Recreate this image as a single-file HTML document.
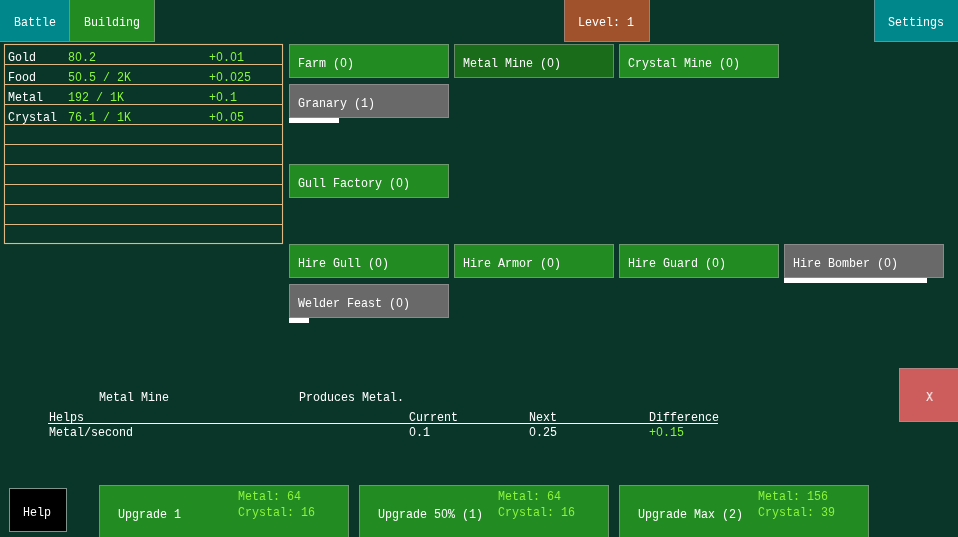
<!DOCTYPE html>
<html><head><meta charset="utf-8"><title>Game</title>
<style>
html,body{margin:0;padding:0;}
body{width:958px;height:537px;overflow:hidden;position:relative;background:#0a3629;font-family:"Liberation Mono",monospace;}
#w{position:absolute;left:0;top:0;width:958px;height:537px;overflow:hidden;will-change:transform;}
.b{position:absolute;box-sizing:border-box;}
.btn{border:1px solid rgba(160,160,160,0.6);}
.teal{background:#00878b;} .green{background:#228b22;} .dgreen{background:#1a6b1a;} .gray{background:#696969;}
.sienna{background:#a0522d;} .red{background:#cd5c5c;}
.help{background:#000;border-color:rgba(170,195,185,0.75);}
.bar{height:5px;background:#fff;}
.rule{height:1px;background:#fff;}
#res{border:1px solid #deb887;box-shadow:0 0 1px rgba(210,160,90,0.55),inset 0 0 1px rgba(210,160,90,0.55);}
.row{position:absolute;left:0;width:277px;height:20px;box-sizing:border-box;border-bottom:1px solid #deb887;}
.row.last{border-bottom:0;height:18px;}
.t{position:absolute;white-space:pre;font-size:13px;line-height:16px;color:#fff;transform:scaleX(0.8973);transform-origin:0 0;}
.lime{color:#8af53a;}
.z{display:inline-block;width:0.6001em;text-align:center;line-height:0;font-family:"Liberation Sans",sans-serif;}
</style></head><body><div id="w">
<div id="nav">
<div class="b btn teal" style="left:-2px;top:-2px;width:72px;height:44px;"><span class="t" style="left:14.5px;top:16px">Battle</span></div>
<div class="b btn green" style="left:69px;top:-2px;width:86px;height:44px;"><span class="t" style="left:13.5px;top:16px">Building</span></div>
<div class="b btn sienna" style="left:564px;top:-2px;width:86px;height:44px;"><span class="t" style="left:12.5px;top:16px">Level: 1</span></div>
<div class="b btn teal" style="left:874px;top:-2px;width:86px;height:44px;"><span class="t" style="left:13px;top:16px">Settings</span></div>
</div>
<div id="res" class="b" style="left:4px;top:44px;width:279px;height:200px">
<div class="row" style="top:0px"><span class="t" style="left:3.3px;top:5px">Gold</span><span class="t lime" style="left:63.3px;top:5px">8<span class="z">0</span>.2</span><span class="t lime" style="left:203.9px;top:5px">+<span class="z">0</span>.<span class="z">0</span>1</span></div>
<div class="row" style="top:20px"><span class="t" style="left:3.3px;top:5px">Food</span><span class="t lime" style="left:63.3px;top:5px">5<span class="z">0</span>.5 / 2K</span><span class="t lime" style="left:203.9px;top:5px">+<span class="z">0</span>.<span class="z">0</span>25</span></div>
<div class="row" style="top:40px"><span class="t" style="left:3.3px;top:5px">Metal</span><span class="t lime" style="left:63.3px;top:5px">192 / 1K</span><span class="t lime" style="left:203.9px;top:5px">+<span class="z">0</span>.1</span></div>
<div class="row" style="top:60px"><span class="t" style="left:3.3px;top:5px">Crystal</span><span class="t lime" style="left:63.3px;top:5px">76.1 / 1K</span><span class="t lime" style="left:203.9px;top:5px">+<span class="z">0</span>.<span class="z">0</span>5</span></div>
<div class="row" style="top:80px"></div>
<div class="row" style="top:100px"></div>
<div class="row" style="top:120px"></div>
<div class="row" style="top:140px"></div>
<div class="row" style="top:160px"></div>
<div class="row last" style="top:180px"></div>
</div>
<div id="grid">
<div class="b btn green" style="left:289px;top:44px;width:160px;height:34px;"><span class="t" style="left:8.3px;top:11px">Farm (<span class="z">0</span>)</span></div>
<div class="b btn dgreen" style="left:454px;top:44px;width:160px;height:34px;"><span class="t" style="left:8.3px;top:11px">Metal Mine (<span class="z">0</span>)</span></div>
<div class="b btn green" style="left:619px;top:44px;width:160px;height:34px;"><span class="t" style="left:8.3px;top:11px">Crystal Mine (<span class="z">0</span>)</span></div>
<div class="b btn gray" style="left:289px;top:84px;width:160px;height:34px;"><span class="t" style="left:8.3px;top:11px">Granary (1)</span></div>
<div class="b bar" style="left:289px;top:118px;width:50px"></div>
<div class="b btn green" style="left:289px;top:164px;width:160px;height:34px;"><span class="t" style="left:8.3px;top:11px">Gull Factory (<span class="z">0</span>)</span></div>
<div class="b btn green" style="left:289px;top:244px;width:160px;height:34px;"><span class="t" style="left:8.3px;top:11px">Hire Gull (<span class="z">0</span>)</span></div>
<div class="b btn green" style="left:454px;top:244px;width:160px;height:34px;"><span class="t" style="left:8.3px;top:11px">Hire Armor (<span class="z">0</span>)</span></div>
<div class="b btn green" style="left:619px;top:244px;width:160px;height:34px;"><span class="t" style="left:8.3px;top:11px">Hire Guard (<span class="z">0</span>)</span></div>
<div class="b btn gray" style="left:784px;top:244px;width:160px;height:34px;"><span class="t" style="left:8.3px;top:11px">Hire Bomber (<span class="z">0</span>)</span></div>
<div class="b bar" style="left:784px;top:278px;width:143px"></div>
<div class="b btn gray" style="left:289px;top:284px;width:160px;height:34px;"><span class="t" style="left:8.3px;top:11px">Welder Feast (<span class="z">0</span>)</span></div>
<div class="b bar" style="left:289px;top:318px;width:20px"></div>
</div>
<div id="info">
<span class="t" style="left:98.5px;top:390px">Metal Mine</span>
<span class="t" style="left:298.5px;top:390px">Produces Metal.</span>
<span class="t" style="left:48.5px;top:410px">Helps</span>
<span class="t" style="left:408.5px;top:410px">Current</span>
<span class="t" style="left:528.5px;top:410px">Next</span>
<span class="t" style="left:648.5px;top:410px">Difference</span>
<div class="b rule" style="left:48px;top:423px;width:670px"></div>
<span class="t" style="left:48.5px;top:425px">Metal/second</span>
<span class="t" style="left:408.5px;top:425px"><span class="z">0</span>.1</span>
<span class="t" style="left:528.5px;top:425px"><span class="z">0</span>.25</span>
<span class="t lime" style="left:648.5px;top:425px">+<span class="z">0</span>.15</span>
<div class="b btn red" style="left:899px;top:368px;width:61px;height:54px;"><span class="t" style="left:25.8px;top:21px">X</span></div>
</div>
<div id="foot">
<div class="b btn help" style="left:9px;top:488px;width:58px;height:44px;"><span class="t" style="left:13.3px;top:16px">Help</span></div>
<div class="b btn green" style="left:99px;top:485px;width:250px;height:54px;"><span class="t" style="left:18.3px;top:21px">Upgrade 1</span><span class="t lime" style="left:138.3px;top:3px">Metal: 64</span><span class="t lime" style="left:138.3px;top:19px">Crystal: 16</span></div>
<div class="b btn green" style="left:359px;top:485px;width:250px;height:54px;"><span class="t" style="left:18.3px;top:21px">Upgrade 5<span class="z">0</span>% (1)</span><span class="t lime" style="left:138.3px;top:3px">Metal: 64</span><span class="t lime" style="left:138.3px;top:19px">Crystal: 16</span></div>
<div class="b btn green" style="left:619px;top:485px;width:250px;height:54px;"><span class="t" style="left:18.3px;top:21px">Upgrade Max (2)</span><span class="t lime" style="left:138.3px;top:3px">Metal: 156</span><span class="t lime" style="left:138.3px;top:19px">Crystal: 39</span></div>
</div>
</div></body></html>
